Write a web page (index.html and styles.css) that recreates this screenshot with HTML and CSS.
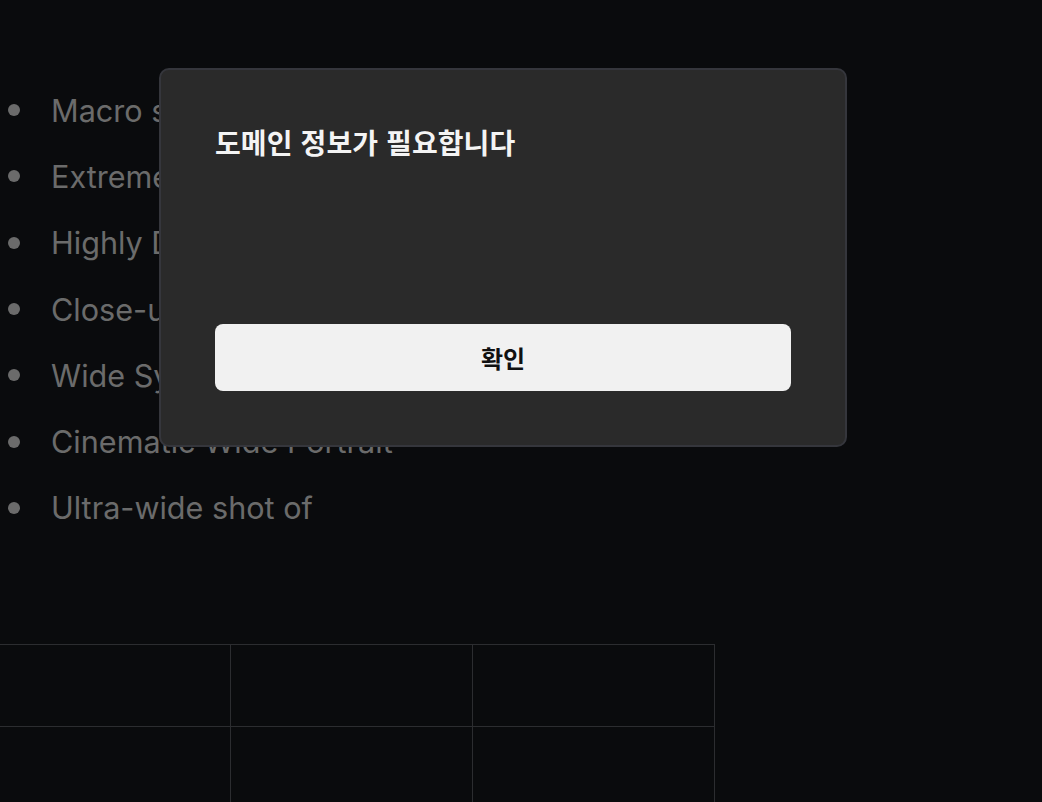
FILE: index.html
```html
<!DOCTYPE html>
<html lang="ko">
<head>
<meta charset="utf-8">
<title>Dialog</title>
<link rel="stylesheet" href="styles.css">
</head>
<body>
  <main class="page">
    <ul class="prompt-list">
      <li class="prompt-item">Macro shot of</li>
      <li class="prompt-item">Extreme Close-up</li>
      <li class="prompt-item">Highly Detailed</li>
      <li class="prompt-item">Close-up shot of</li>
      <li class="prompt-item">Wide Symmetrical</li>
      <li class="prompt-item">Cinematic Wide Portrait</li>
      <li class="prompt-item">Ultra-wide shot of</li>
    </ul>
    <table class="grid-table">
      <tr><td></td><td></td><td></td></tr>
      <tr><td></td><td></td><td></td></tr>
    </table>
  </main>

  <div class="dialog" role="dialog" aria-labelledby="dlg-title">
    <h2 class="dialog-title" id="dlg-title">도메인 정보가 필요합니다</h2>
    <button class="dialog-button" type="button">확인</button>
  </div>
</body>
</html>
```

FILE: styles.css
```css
html, body {
  margin: 0;
  padding: 0;
  background: #0a0b0d;
  height: 100%;
  overflow: hidden;
}

body {
  font-family: "Inter", "Noto Sans", "Noto Sans CJK KR", sans-serif;
}

.page {
  padding-top: 77px;
}

.prompt-list {
  list-style: none;
  margin: 0;
  padding: 0;
}

.prompt-item {
  display: flex;
  align-items: center;
  height: 66.3px;
  font-size: 30.6px;
  color: #6b6b6b;
  white-space: nowrap;
  letter-spacing: 0;
}

.prompt-item::before {
  content: "";
  width: 12px;
  height: 12px;
  border-radius: 50%;
  background: #6b6b6b;
  margin-left: 8px;
  margin-right: 31px;
  flex: none;
}

.grid-table {
  margin-top: 103px;
  margin-left: -12px;
  border-collapse: collapse;
}

.grid-table td {
  width: 241px;
  height: 81px;
  padding: 0;
  border: 1px solid #2c2d30;
}

.dialog {
  position: absolute;
  left: 159px;
  top: 68px;
  width: 688px;
  height: 379px;
  box-sizing: border-box;
  background: #2a2a2a;
  border: 2px solid #35363c;
  border-radius: 10px;
  padding: 52px 54px 54px;
  display: flex;
  flex-direction: column;
  font-family: "Noto Sans CJK KR", sans-serif;
}

.dialog-title {
  margin: 0;
  font-size: 28px;
  line-height: 40px;
  font-weight: 700;
  color: #f4f4f4;
  letter-spacing: 0.1px;
}

.dialog-button {
  margin-top: auto;
  height: 67px;
  width: 100%;
  border: none;
  border-radius: 8px;
  background: #f1f1f1;
  color: #111111;
  font-family: "Noto Sans CJK KR", sans-serif;
  font-size: 24px;
  font-weight: 700;
  cursor: pointer;
}
```
